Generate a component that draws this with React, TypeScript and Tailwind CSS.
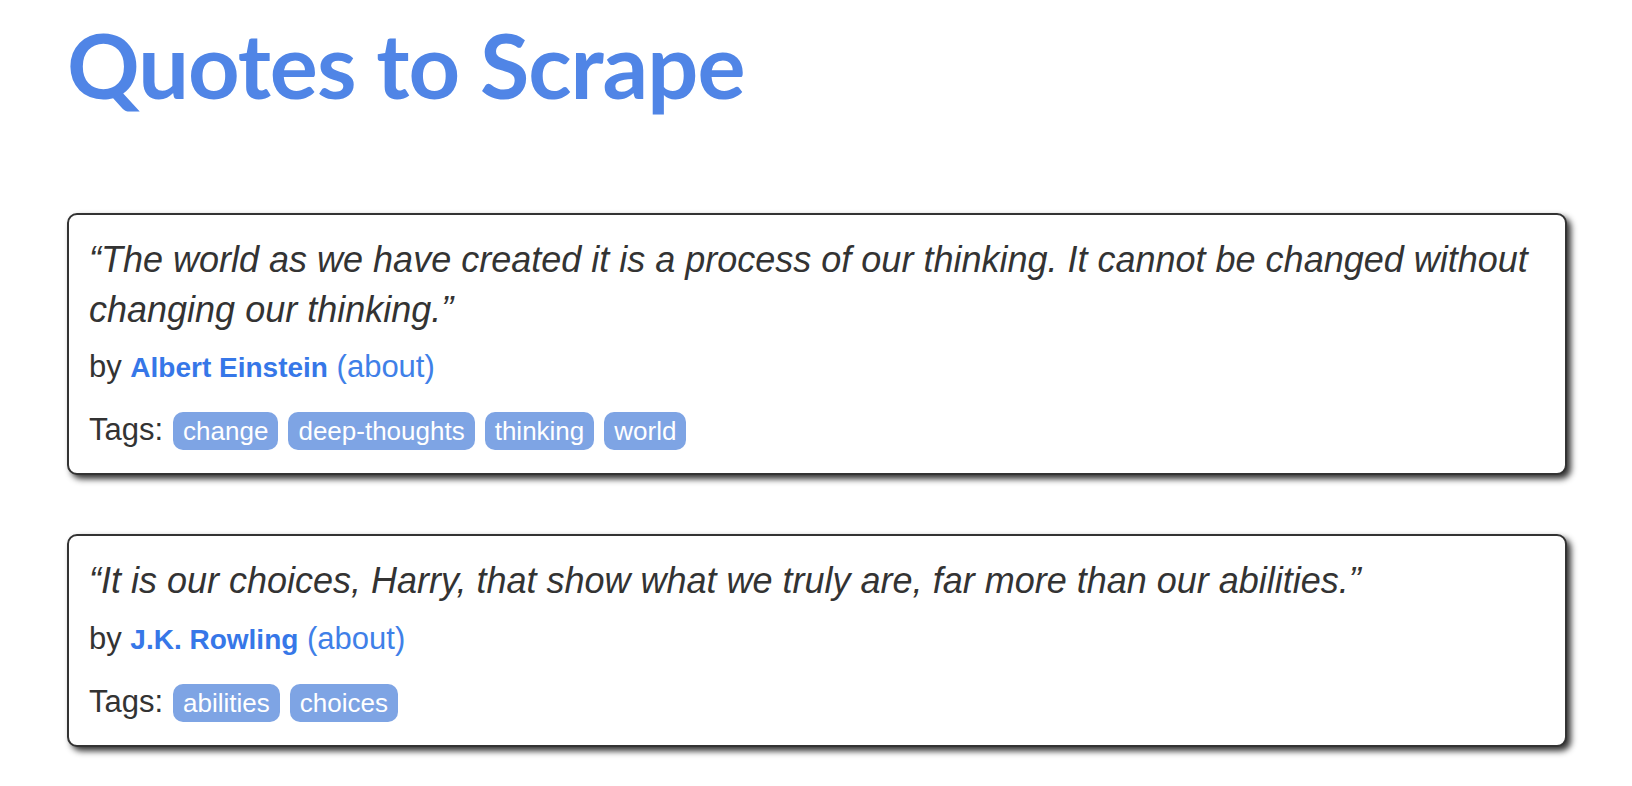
const quotes = [
  {
    text: "“The world as we have created it is a process of our thinking. It cannot be changed without changing our thinking.”",
    author: "Albert Einstein",
    tags: ["change", "deep-thoughts", "thinking", "world"],
  },
  {
    text: "“It is our choices, Harry, that show what we truly are, far more than our abilities.”",
    author: "J.K. Rowling",
    tags: ["abilities", "choices"],
  },
];

function Quote({ text, author, tags }: { text: string; author: string; tags: string[] }) {
  return (
    <div className="mb-[59px] rounded-[10px] border-2 border-[#333333] bg-white p-[20px] shadow-[4px_4px_6px_#333333]">
      <span className="mb-[11px] block text-[36px] leading-[49.5px] italic">{text}</span>
      <div className="text-[31px] leading-[43px]">
        by <span className="text-[28px] font-bold text-[#3677e8]">{author}</span>{" "}
        <a className="text-[#3f80e8]">(about)</a>
      </div>
      <div className="mt-[19px] text-[31px] leading-[43px]">
        Tags:
        {tags.map((t, i) => (
          <a
            key={t}
            className={`rounded-[10px] bg-[#7ea4e4] px-[10px] py-[4px] text-[26px] text-white ${i === 0 ? "ml-[10px]" : "ml-[10px]"}`}
          >
            {t}
          </a>
        ))}
      </div>
    </div>
  );
}

export default function App() {
  return (
    <div className="min-h-screen bg-white font-['Liberation_Sans',Arial,sans-serif] text-[#333333]">
      <div className="ml-[67px] w-[1500px]">
        <h1 className="pt-[19px] pb-[104px] font-['Lato',sans-serif] text-[90px] leading-none font-bold tracking-[-1px] text-[#5085e6]">
          Quotes to Scrape
        </h1>
        {quotes.map((q) => (
          <Quote key={q.author} {...q} />
        ))}
      </div>
    </div>
  );
}
